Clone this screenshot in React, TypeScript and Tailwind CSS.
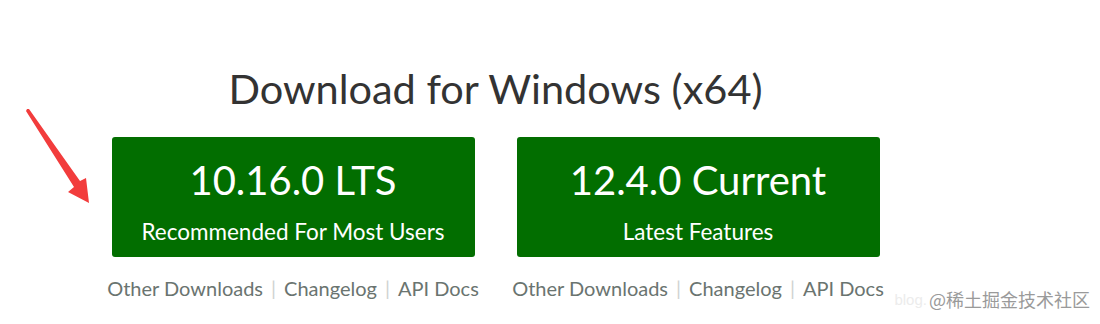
import React from "react";

const font = { fontFamily: '"Lato", "Noto Sans", sans-serif' };

function LinkRow() {
  return (
    <div className="mt-[21px] flex items-center justify-center whitespace-nowrap text-[20px] leading-none text-[#6a7470]">
      <span>Other Downloads</span>
      <span className="mx-[8px] text-[#cfd3d1]">|</span>
      <span>Changelog</span>
      <span className="mx-[8px] text-[#cfd3d1]">|</span>
      <span>API Docs</span>
    </div>
  );
}

function DownloadButton({ version, label }: { version: string; label: string }) {
  return (
    <div className="flex w-[363px] flex-col">
      <a className="flex h-[120px] flex-col items-center justify-center rounded-[3px] bg-[#026e00] pt-[10px] text-white">
        <span className="text-[40px] leading-none">{version}</span>
        <span className="mt-[21px] text-[22.5px] leading-none">{label}</span>
      </a>
      <LinkRow />
    </div>
  );
}

export default function App() {
  return (
    <div className="relative h-[324px] w-[1100px] overflow-hidden bg-white" style={font}>
      <div className="flex w-[991px] flex-col items-center pt-[68px]">
        <h1 className="text-[41.5px] leading-none text-[#333]">Download for Windows (x64)</h1>
        <div className="mt-[27px] flex gap-[42px]">
          <DownloadButton version="10.16.0 LTS" label="Recommended For Most Users" />
          <DownloadButton version="12.4.0 Current" label="Latest Features" />
        </div>
      </div>

      {/* red arrow annotation */}
      <svg className="absolute left-0 top-0" width="120" height="220" viewBox="0 0 120 220">
        <polygon points="27,109 29,109 80,181 86,178 89,203 68,192 74,187 26,111" fill="#f23c3c" />
      </svg>

      {/* watermark */}
      <div className="absolute right-[10px] top-[290px] flex items-center gap-[2px] whitespace-nowrap leading-none">
        <span className="text-[15px] text-[#ececec]" style={{ fontFamily: '"Liberation Sans", sans-serif' }}>blog.</span>
        <span className="text-[18px] text-[#9a9a9a]" style={{ fontFamily: '"Noto Sans CJK SC", sans-serif' }}>@稀土掘金技术社区</span>
      </div>
    </div>
  );
}
